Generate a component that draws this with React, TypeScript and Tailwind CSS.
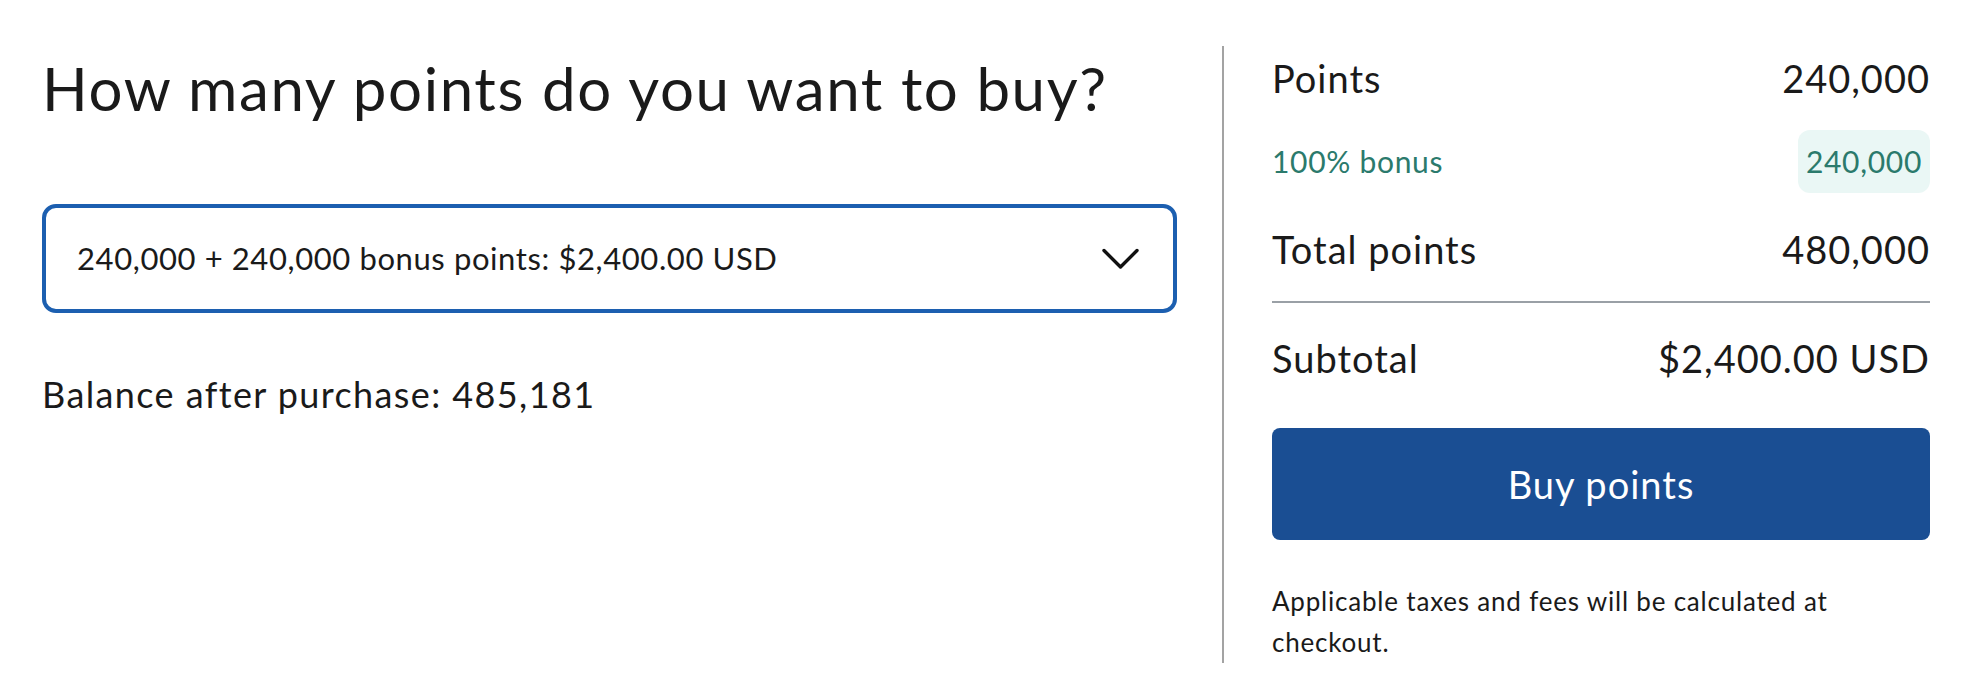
import React from "react";

const font = { fontFamily: '"Lato", "Open Sans", sans-serif' };

const ChevronDown = () => (
  <svg width="37" height="22" viewBox="0 0 37 22" fill="none">
    <path d="M2 2.5 L18.5 19 L35 2.5" stroke="#111" strokeWidth="3.4" strokeLinecap="round" strokeLinejoin="round" />
  </svg>
);

export default function App() {
  return (
    <div className="bg-white w-[1986px] h-[692px] text-[#1a1a1a]" style={font}>
      <div className="flex pt-[46px] pl-[42px]">
        {/* left: choose amount */}
        <div className="w-[1135px]">
          <h1 className="text-[60px] leading-[60px] tracking-[1.6px] mt-[12px] font-normal whitespace-nowrap">How many points do you want to buy?</h1>
          <div className="mt-[86px] h-[109px] border-[4px] border-[#1c5fb0] rounded-[14px] flex items-center justify-between pl-[31px] pr-[34px]">
            <span className="text-[31px] tracking-[0.6px]">240,000 + 240,000 bonus points: $2,400.00 USD</span>
            <ChevronDown />
          </div>
          <p className="mt-[61px] text-[36px] leading-[40px] tracking-[1.4px]">Balance after purchase: 485,181</p>
        </div>

        <div className="ml-[45px] w-[2px] h-[617px] bg-[#a3a3a3]" />

        {/* right: summary */}
        <div className="ml-[48px] w-[658px]">
          <div className="h-[64px] flex items-center justify-between text-[38px] tracking-[1px]">
            <span>Points</span>
            <span>240,000</span>
          </div>
          <div className="mt-[20px] h-[63px] flex items-center justify-between text-[30px] tracking-[0.7px] text-[#2b7a6c]">
            <span>100% bonus</span>
            <span className="h-full flex items-center px-[8px] rounded-[12px] bg-[#eaf7f5]">240,000</span>
          </div>
          <div className="mt-[28px] h-[56px] flex items-center justify-between text-[38px] tracking-[1px]">
            <span>Total points</span>
            <span>480,000</span>
          </div>
          <div className="mt-[24px] h-[2px] bg-[#9aa0a6]" />
          <div className="mt-[27px] h-[56px] flex items-center justify-between text-[38px] tracking-[1px]">
            <span>Subtotal</span>
            <span>$2,400.00 USD</span>
          </div>
          <button className="mt-[42px] w-full h-[112px] rounded-[8px] bg-[#1a4e93] text-white text-[38px] tracking-[1px]">Buy points</button>
          <p className="mt-[41px] text-[26px] leading-[41px] tracking-[0.8px]">Applicable taxes and fees will be calculated at checkout.</p>
        </div>
      </div>
    </div>
  );
}
